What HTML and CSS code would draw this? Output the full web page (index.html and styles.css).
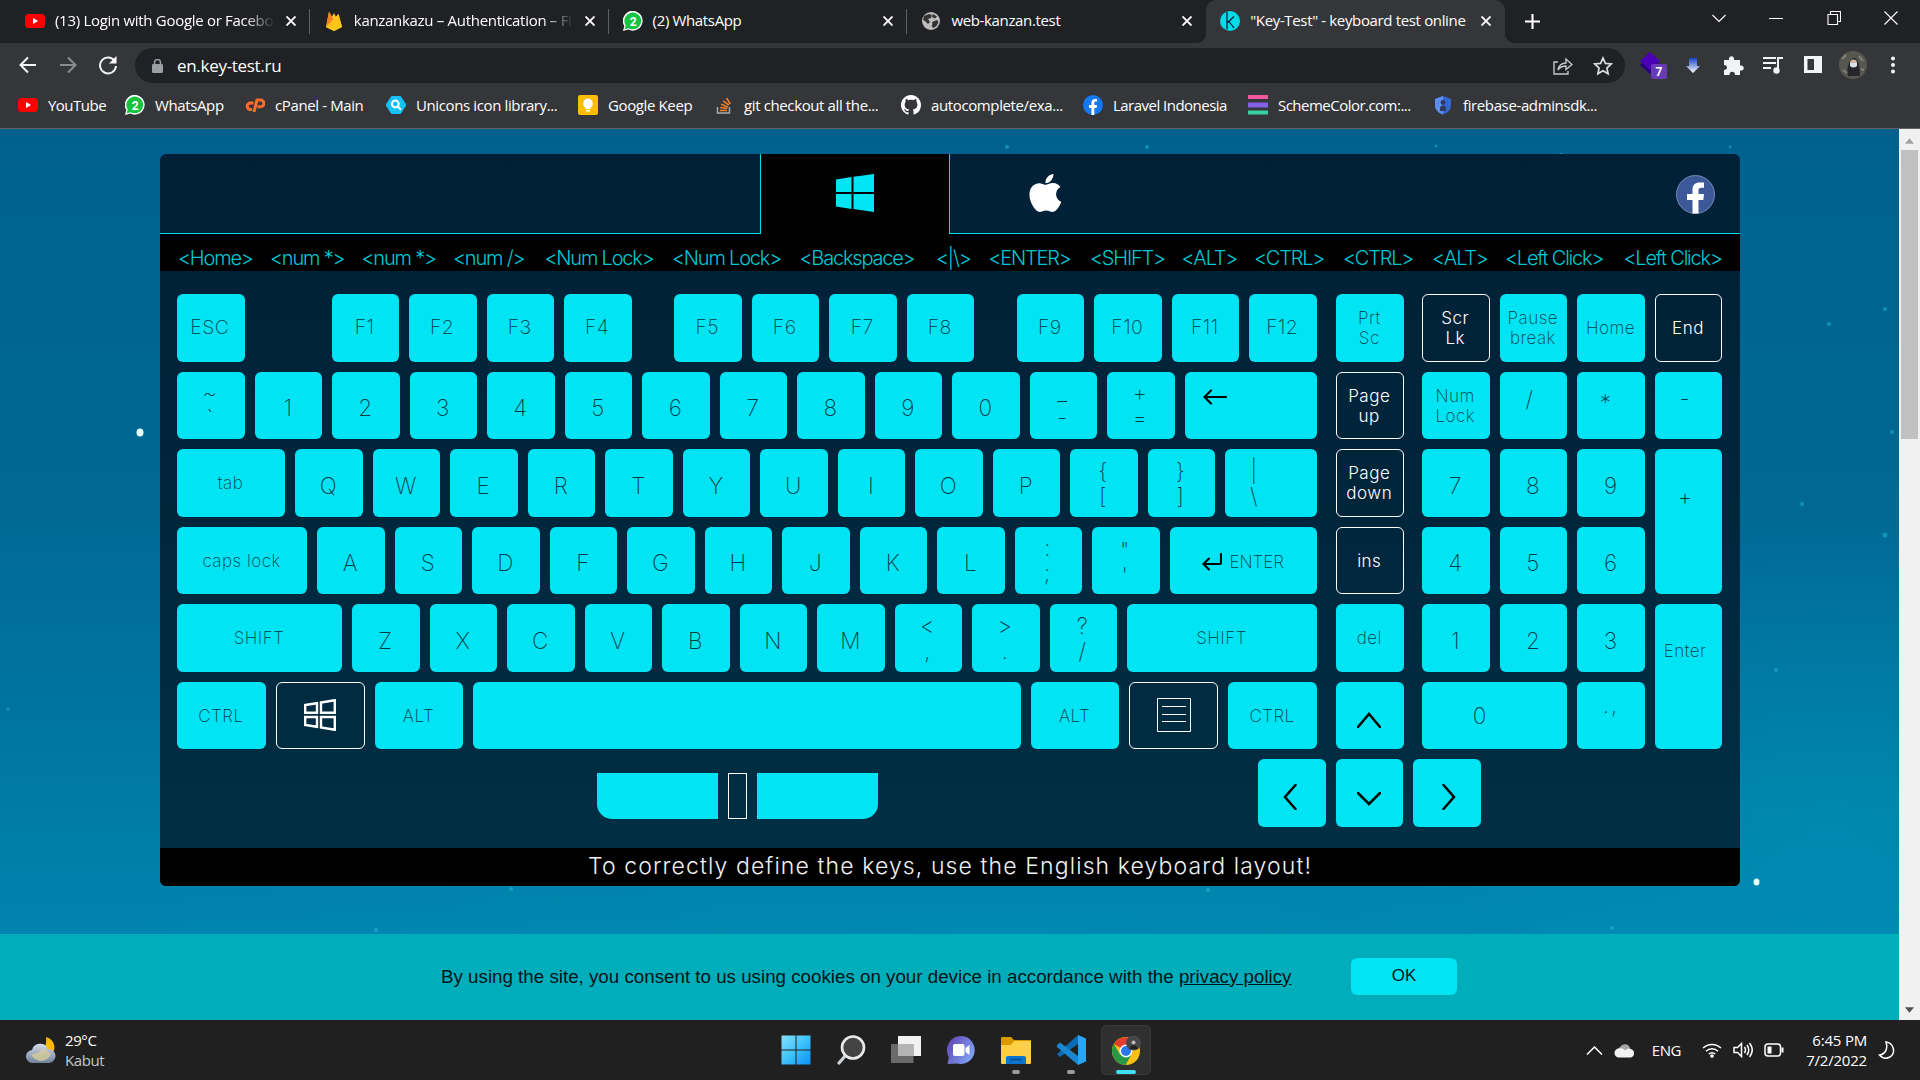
FILE: index.html
```html
<!DOCTYPE html>
<html lang="en">
<head>
<meta charset="utf-8">
<title>"Key-Test" - keyboard test online</title>
<link rel="stylesheet" href="styles.css">
</head>
<body>
<svg class="defs" width="0" height="0">
  <symbol id="yt" viewBox="0 0 20 20"><rect y="3" width="20" height="14" rx="3.5" fill="#f00"/><path d="M8 7l5.2 3L8 13z" fill="#fff"/></symbol>
  <symbol id="fb" viewBox="0 0 20 20"><circle cx="10" cy="10" r="10" fill="#1479f2"/><path d="M8.400 20v-7H6v-3h2.400V7.800C8.400 5.400 9.800 4 12 4c1 0 2 .2 2 .2v2.400h-1.200c-1.100 0-1.500.7-1.500 1.500V10H14l-.4 3h-2.300v7z" fill="#fff"/></symbol>
  <symbol id="x" viewBox="0 0 10 10"><path d="M.5.5l9 9M9.500.5l-9 9" stroke="#fff" stroke-width="1.900"/></symbol>
</svg>

<header class="chrome">
  <div class="tabs">
    <div class="tab"><svg class="fav"><use href="#yt"/></svg><span class="title fade">(13) Login with Google or Facebo</span><svg class="x"><use href="#x"/></svg></div>
    <div class="tab"><svg class="fav" viewBox="0 0 20 20"><path d="M2 16L5 .8l3 5L10 2l2 4 2.500-3L18 16l-8 4z" fill="#ffca28"/><path d="M2 16L5 .8l5.200 9z" fill="#f58220"/><path d="M2 16L14.500 3 18 16l-8 4z" fill="#ffc61a"/></svg><span class="title fade">kanzankazu – Authentication – Fi</span><svg class="x"><use href="#x"/></svg></div>
    <div class="tab"><svg class="fav" viewBox="0 0 20 20"><path d="M0 20l1.300-5A9.900 9.900 0 1 1 5.200 18.600z" fill="#fff"/><path d="M1.700 18.300l1-3.800A8.400 8.400 0 1 1 5.500 17.200z" fill="#16c33f"/><text x="10" y="14.500" text-anchor="middle" class="wa-n">2</text></svg><span class="title">(2) WhatsApp</span><svg class="x"><use href="#x"/></svg></div>
    <div class="tab last"><svg class="fav" viewBox="0 0 20 20"><circle cx="10" cy="10" r="9" fill="#bdbdbd"/><path d="M3 5l5-2 3 1-1 3-3 1 2 3-2 2-3-3-2-1zM11 11l5-2 1.500 2-2 4-3 2-2-2 1-2zM12 3l4 2.500-2 2-3-1.500z" fill="#333"/></svg><span class="title">web-kanzan.test</span><svg class="x"><use href="#x"/></svg></div>
    <div class="tab active"><svg class="fav" viewBox="0 0 20 20"><circle cx="10" cy="10" r="10" fill="#00dbe8"/><path d="M7 1v17.500M7 12l7-6.500M9 10.500l5 6.500" stroke="#013" stroke-width="1.200" fill="none"/></svg><span class="title">"Key-Test" - keyboard test online</span><svg class="x"><use href="#x"/></svg></div>
    <svg class="plus" viewBox="0 0 14 14"><path d="M7 0v14M0 7h14" stroke="#fff" stroke-width="2"/></svg>
    <div class="win">
      <svg viewBox="0 0 14 14"><path d="M.5 4l6.500 6.500L13.500 4" class="thin"/></svg>
      <svg viewBox="0 0 14 14"><path d="M0 7.500h14" class="thin"/></svg>
      <svg viewBox="0 0 14 14"><path d="M1 3.500h9.500v10H1zM3.500 3.500v-3h10v10h-3" class="thin"/></svg>
      <svg viewBox="0 0 14 14"><path d="M.5.5l13 13M13.500.5l-13 13" class="thin"/></svg>
    </div>
  </div>
  <div class="toolbar">
    <div class="nav">
      <svg viewBox="0 0 20 20"><path d="M18 10H3M10 2.500L2.500 10l7.500 7.500" class="st"/></svg>
      <svg viewBox="0 0 20 20" class="dim"><path d="M2 10h15M10 2.500l7.500 7.500-7.500 7.500" class="st"/></svg>
      <svg viewBox="0 0 20 20"><path d="M17 6.500A8 8 0 1 0 18 11" class="st"/><path d="M18.500 1v7.500H11z" fill="#fff"/></svg>
    </div>
    <div class="omni">
      <svg class="lock" viewBox="0 0 11 14"><rect y="5" width="11" height="9" rx="1.200" fill="#9aa0a6"/><path d="M2.500 6V3.500a3 3 0 0 1 6 0V6" fill="none" stroke="#9aa0a6" stroke-width="1.500"/></svg>
      <span class="url">en.key-test.ru</span>
      <svg class="share" viewBox="0 0 20 18"><path d="M5 5H1v12h14v-3M5 13c1-5 4-7 8-7V2l6 5.500-6 5V9c-4 0-6 1-8 4z" fill="none" stroke="#c4c7cb" stroke-width="1.400"/></svg>
      <svg class="star" viewBox="0 0 20 20"><path d="M10 2l2.400 5.400 5.900.6-4.400 4 1.200 5.800L10 14.800l-5.100 3L6.100 12 1.700 8l5.900-.6z" fill="none" stroke="#dadce0" stroke-width="1.700"/></svg>
    </div>
    <div class="ext">
      <svg viewBox="0 0 28 28"><path d="M1 14l10-9 10 9-10 9z" fill="#24007c"/><path d="M1 10l10-9 10 9-10 9z" fill="#4b00b8"/><rect x="12" y="13" width="16" height="15" rx="2" fill="#673ab7"/><text x="20" y="25" text-anchor="middle" class="badge">7</text></svg>
      <svg viewBox="0 0 28 28"><defs><linearGradient id="dl" x2="0" y2="1"><stop stop-color="#1543c4"/><stop offset="1" stop-color="#fff"/></linearGradient></defs><path d="M10 7h8v8h3l-7 7-7-7h3z" fill="url(#dl)"/></svg>
      <svg viewBox="0 0 28 28"><path d="M5 9h5c-1-5 6-5 5 0h6v5.500c5-1 5 6 0 5V24h-5c.5-4.500-6-4.500-5.500 0H5v-5c4 0 4-5 0-5z" fill="#f1f3f4"/></svg>
      <svg viewBox="0 0 28 28"><path d="M4 7h13M4 12h13M4 17h8" class="st"/><path d="M19 20V7h5" class="st"/><circle cx="17.500" cy="19.500" r="3.200" fill="#f1f3f4"/></svg>
      <svg viewBox="0 0 28 28"><path fill="#f1f3f4" fill-rule="evenodd" d="M5 5h18v17H5zM8.500 8v11H15V8z"/></svg>
      <svg viewBox="0 0 28 28"><circle cx="14" cy="14" r="14" fill="#56574f"/><path d="M9 25c-2-8 1-17 6-18 4 0 6 8 6 18z" fill="#25262a"/><circle cx="14.500" cy="12" r="3.500" fill="#d4b8ac"/><path d="M11 12h7v3q-3.500 3-7 0z" fill="#d9e1e6"/><path d="M3 8l4-4M4 19l4 3M20 5l4 5M22 18l3 1" stroke="#83847a" stroke-width="2"/></svg>
      <svg viewBox="0 0 28 28"><g fill="#f1f3f4"><circle cx="14" cy="7.500" r="2"/><circle cx="14" cy="14" r="2"/><circle cx="14" cy="20.500" r="2"/></g></svg>
    </div>
  </div>
  <nav class="marks">
    <a><svg><use href="#yt"/></svg><span class="tight">YouTube</span></a>
    <a><svg viewBox="0 0 20 20"><path d="M0 20l1.300-5A9.900 9.900 0 1 1 5.200 18.600z" fill="#fff"/><path d="M1.700 18.300l1-3.800A8.400 8.400 0 1 1 5.500 17.200z" fill="#16c33f"/><text x="10" y="14.500" text-anchor="middle" class="wa-n">2</text></svg>WhatsApp</a>
    <a><svg viewBox="0 0 20 20"><g fill="none" stroke="#ff6c2c" stroke-width="3"><path d="M8.500 8H5.500a3.300 3.300 0 0 0 0 6.600H7"/><path d="M9 17l3-12h3.500a3.300 3.300 0 0 1 0 6.800h-3"/></g></svg>cPanel - Main</a>
    <a><svg viewBox="0 0 20 20"><path d="M5.500 1.500h9L20 10l-5.500 8.500h-9L0 10z" fill="#13c0f7" stroke="#13c0f7"/><circle cx="9.300" cy="9" r="3.400" class="w2"/><path d="M12 11.700l3 3" class="w2"/></svg>Unicons icon library...</a>
    <a><svg viewBox="0 0 20 20"><rect width="20" height="20" rx="2" fill="#fbbc04"/><path d="M10 3.500a5 5 0 0 0-2.500 9.200V14h5v-1.300A5 5 0 0 0 10 3.500zM8 15h4v1.500H8z" fill="#fff"/></svg>Google Keep</a>
    <a><svg viewBox="0 0 20 20"><path d="M3.500 12v6h12v-6" fill="none" stroke="#a6aab0" stroke-width="1.500"/><path d="M6 15.500h7M6.300 12.500l7 1M7.200 9.200l6.500 2.800M9.200 5.800l5.600 4.400M12.500 3l3.800 6" stroke="#f48024" stroke-width="1.600"/></svg>git checkout all the...</a>
    <a><svg viewBox="0 0 16 16"><path fill="#fff" d="M8 0C3.580 0 0 3.580 0 8c0 3.540 2.290 6.530 5.470 7.590.4.070.55-.17.55-.38 0-.19-.01-.82-.01-1.490-2.010.37-2.530-.49-2.690-.94-.09-.23-.48-.94-.82-1.130-.28-.15-.68-.52-.01-.53.63-.01 1.080.58 1.230.82.72 1.210 1.870.87 2.330.66.07-.52.28-.87.51-1.070-1.780-.2-3.640-.89-3.640-3.950 0-.87.31-1.590.82-2.150-.08-.2-.36-1.020.08-2.120 0 0 .67-.21 2.200.82.64-.18 1.320-.27 2-.27s1.360.09 2 .27c1.530-1.040 2.200-.82 2.200-.82.44 1.100.16 1.920.08 2.120.51.560.82 1.270.82 2.150 0 3.070-1.870 3.750-3.650 3.950.29.25.54.73.54 1.480 0 1.070-.01 1.930-.01 2.200 0 .21.15.46.55.38A8.010 8.010 0 0 0 16 8c0-4.420-3.580-8-8-8z"/></svg>autocomplete/exa...</a>
    <a><svg><use href="#fb"/></svg><span class="tight">Laravel Indonesia</span></a>
    <a><svg viewBox="0 0 20 20"><path fill="#f0599e" d="M0 0h20v4H0z"/><path fill="#8561e8" d="M0 7.500h20v5H0z"/><path fill="#36cfa0" d="M0 15.500h20v4H0z"/></svg><span class="tight">SchemeColor.com:...</span></a>
    <a><svg viewBox="0 0 20 20"><path d="M10 1l8 3v6c0 5-3.500 8-8 9.500C5.500 18 2 15 2 10V4z" fill="#3367d6"/><path d="M10 1v18.500C5.500 18 2 15 2 10V4z" fill="#5e8df0"/><circle cx="10" cy="7.500" r="2.400" fill="#2e3b5e"/><path d="M7 16v-2.500a3 3 0 0 1 6 0V16z" fill="#2e3b5e"/></svg>firebase-adminsdk...</a>
  </nav>
</header>

<main class="page">
  <div class="site">
    <svg class="sky" viewBox="0 0 1899 805" preserveAspectRatio="none">
      <g fill="#2fd0e6" opacity=".4"><circle cx="1730" cy="18" r="1.500"/><circle cx="1561" cy="26" r="2"/><circle cx="1436" cy="17" r="1.500"/><circle cx="1007" cy="18" r="2"/><circle cx="1147" cy="18" r="2"/><circle cx="1829" cy="195" r="2"/><circle cx="1885" cy="180" r="2"/><circle cx="1892" cy="303" r="2"/><circle cx="1802" cy="375" r="2"/><circle cx="1885" cy="406" r="2.500"/><circle cx="376" cy="801" r="2"/><circle cx="511" cy="760" r="2"/><circle cx="1208" cy="761" r="2"/><circle cx="1776" cy="541" r="2"/><circle cx="1612" cy="799" r="2"/><circle cx="8" cy="580" r="1.500"/></g>
      <g fill="#e8ffff"><ellipse cx="140" cy="303.500" rx="3.500" ry="4"/><ellipse cx="1756.500" cy="753" rx="3" ry="3.500"/></g>
    </svg>
    <section class="panel">
      <div class="os">
        <div class="side"></div>
        <div class="os-tab on"><svg width="38" height="38" viewBox="0 0 38 38"><path fill="#00e4f3" d="M0 5.500L15.500 3v15H0zM17.500 2.700L38 0v18H17.500zM0 20h15.500v15L0 32.500zM17.500 20H38v18l-20.500-3z"/></svg></div>
        <div class="os-tab"><svg width="32" height="38" viewBox="4 32 367 448"><path fill="#fff" d="M318.700 268.700c-.2-36.700 16.400-64.400 50-84.800-18.800-26.900-47.200-41.700-84.700-44.600-35.500-2.800-74.300 20.700-88.500 20.700-15 0-49.400-19.700-76.400-19.700C63.300 141.200 4 184.800 4 273.500q0 39.300 14.400 81.200c12.800 36.700 59 126.700 107.200 125.200 25.200-.6 43-17.900 75.800-17.900 31.800 0 48.300 17.900 76.400 17.900 48.600-.7 90.400-82.500 102.600-119.300-65.200-30.700-61.700-90-61.700-91.900zm-56.600-164.200c27.300-32.400 24.800-61.900 24-72.500-24.100 1.400-52 16.400-67.900 34.900-17.500 19.800-27.800 44.300-25.600 71.900 26.100 2 49.900-11.400 69.500-34.300z"/></svg></div>
        <div class="side right"><svg width="39" height="39" viewBox="0 0 39 39"><circle cx="19.500" cy="19.500" r="19" fill="#3b5998" stroke="#8b9dc3" stroke-width=".8"/><path d="M16.500 38.500V25H11v-6h5.500v-4.500c0-4.700 2.800-7 7-7H28v5.300h-2.600c-2.200 0-2.900 1-2.900 2.700V19H28l-.7 6h-4.800v13.500z" fill="#fff"/></svg></div>
      </div>
      <div class="log"><span>&lt;Home&gt;</span><span>&lt;num *&gt;</span><span>&lt;num *&gt;</span><span>&lt;num /&gt;</span><span>&lt;Num Lock&gt;</span><span>&lt;Num Lock&gt;</span><span>&lt;Backspace&gt;</span><span>&lt;|\&gt;</span><span>&lt;ENTER&gt;</span><span>&lt;SHIFT&gt;</span><span>&lt;ALT&gt;</span><span>&lt;CTRL&gt;</span><span>&lt;CTRL&gt;</span><span>&lt;ALT&gt;</span><span>&lt;Left Click&gt;</span><span>&lt;Left Click&gt;</span></div>
      <div class="board">
        <div class="main">
          <div class="row fn"><b>ESC</b><i></i><b>F1</b><b>F2</b><b>F3</b><b>F4</b><i class="sm"></i><b>F5</b><b>F6</b><b>F7</b><b>F8</b><i class="sm"></i><b>F9</b><b>F10</b><b>F11</b><b>F12</b></div>
          <div class="row nums"><b class="two">~<br>`</b><b>1</b><b>2</b><b>3</b><b>4</b><b>5</b><b>6</b><b>7</b><b>8</b><b>9</b><b>0</b><b class="two">_<br>-</b><b class="two">+<br>=</b><b class="wide back"><svg width="24" height="16" viewBox="0 0 24 16"><path d="M23 8H2M8 1.500L1.500 8 8 14.500" class="k"/></svg></b></div>
          <div class="row"><b class="s tab-k">tab</b><b>Q</b><b>W</b><b>E</b><b>R</b><b>T</b><b>Y</b><b>U</b><b>I</b><b>O</b><b>P</b><b class="two">{<br>[</b><b class="two">}<br>]</b><b class="two wide bs">|<br>\</b></div>
          <div class="row"><b class="s caps">caps lock</b><b>A</b><b>S</b><b>D</b><b>F</b><b>G</b><b>H</b><b>J</b><b>K</b><b>L</b><b class="two">:<br>;</b><b class="two low">"<br>'</b><b class="s wide enter"><svg width="20" height="18" viewBox="0 0 20 18"><path d="M19 1v9q0 1-1 1H2M7 5.500L1.500 11 7 16.500" class="k"/></svg>ENTER</b></div>
          <div class="row"><b class="s lshift">SHIFT</b><b>Z</b><b>X</b><b>C</b><b>V</b><b>B</b><b>N</b><b>M</b><b class="two">&lt;<br>,</b><b class="two">&gt;<br>.</b><b class="two">?<br>/</b><b class="s wide">SHIFT</b></div>
          <div class="row mods"><b class="s">CTRL</b><b class="off"><svg width="32" height="32" viewBox="0 0 32 32"><path d="M1.200 6L13 4.200v9.600H1.200zM17 3.500L30.800 1.200v12.600H17zM1.200 18H13v9.800L1.200 26zM17 18h13.800v12.800L17 28.500z" fill="none" stroke="#fff" stroke-width="2.400"/></svg></b><b class="s">ALT</b><b class="space"></b><b class="s">ALT</b><b class="off"><svg width="34" height="34" viewBox="0 0 34 34"><path d="M.5.5h33v33H.5zM5 8.500h24M5 16.500h24M5 23.500h24" fill="none" stroke="#fff"/></svg></b><b class="s">CTRL</b></div>
        </div>
        <div class="mid"><b class="s">Prt<br>Sc</b><b class="s off">Page<br>up</b><b class="s off">Page<br>down</b><b class="s off">ins</b><b class="s">del</b><b><svg class="arr" width="24" height="16" viewBox="0 0 24 16"><path d="M1 15L12 2l11 13" class="k2"/></svg></b></div>
        <div class="pad">
          <b class="s off">Scr<br>Lk</b><b class="s">Pause<br>break</b><b class="s">Home</b><b class="s off">End</b>
          <b class="s">Num<br>Lock</b><b class="up">/</b><b class="up star-k">*</b><b class="up">-</b>
          <b>7</b><b>8</b><b>9</b><b class="tall plusk">+</b>
          <b>4</b><b>5</b><b>6</b>
          <b>1</b><b>2</b><b>3</b><b class="tall s entk">Enter</b>
          <b class="zero">0</b><b class="up dot">.,</b>
        </div>
      </div>
      <div class="lower">
        <div class="mouse"><span class="ml"></span><span class="mm"></span><span class="mr"></span></div>
        <div class="arrows">
          <b class="al"><svg width="14" height="26" viewBox="0 0 14 26"><path d="M12.500 1L2 13l10.500 12" class="k2"/></svg></b>
          <b class="ad"><svg width="24" height="14" viewBox="0 0 24 14"><path d="M1 1l11 11L23 1" class="k2"/></svg></b>
          <b class="ar"><svg width="14" height="26" viewBox="0 0 14 26"><path d="M1.500 1L12 13 1.500 25" class="k2"/></svg></b>
        </div>
      </div>
      <div class="note"><span>To correctly define the keys, use the English keyboard layout!</span></div>
    </section>
    <div class="cookie"><p>By using the site, you consent to us using cookies on your device in accordance with the <u>privacy policy</u></p><span class="ok">OK</span></div>
  </div>
  <div class="scroll"><svg width="9" height="6" viewBox="0 0 10 6"><path d="M5 0l5 6H0z" fill="#a3a3a3"/></svg><div class="thumb"></div><svg width="9" height="6" viewBox="0 0 10 6"><path d="M5 6l5-6H0z" fill="#505050"/></svg></div>
</main>

<footer class="taskbar">
  <div class="weather">
    <svg width="30" height="28" viewBox="0 0 30 28"><defs><linearGradient id="cl" x2="0" y2="1"><stop stop-color="#d5dbe6"/><stop offset="1" stop-color="#71819b"/></linearGradient></defs><path d="M20 1c8 2 11 11 6 17H12c6-3 9-9 8-17z" fill="#ffb900"/><path d="M7 27a6.500 6.500 0 0 1-1-13 8.500 8.500 0 0 1 16-1 7 7 0 0 1 1 14z" fill="url(#cl)"/><path d="M5 18q7 1 12-6l8 6q-3 7-10 7-8-1-10-7z" fill="#d8cf9b" opacity=".75"/></svg>
    <div><div>29°C</div><div class="grey">Kabut</div></div>
  </div>
  <div class="apps">
    <div><svg viewBox="0 0 30 30"><defs><linearGradient id="wn" x2="1" y2="1"><stop stop-color="#86e1fd"/><stop offset=".5" stop-color="#3fc3fb"/><stop offset="1" stop-color="#0a90f5"/></linearGradient></defs><path d="M.5.5h14v14h-14zM15.500.5h14v14h-14zM.5 15.500h14v14h-14zM15.500 15.500h14v14h-14z" fill="url(#wn)"/></svg></div>
    <div><svg viewBox="0 0 30 30"><path d="M9.500 20.500L3 28" stroke="#d0d3d8" stroke-width="3.200" stroke-linecap="round"/><circle cx="17" cy="12.500" r="11" fill="#444" stroke="#e8eaed" stroke-width="2.600"/></svg></div>
    <div><svg viewBox="0 0 30 30"><path d="M7 1h23v20H7z" fill="#f2f2f2"/><path d="M0 9h22.500v19H0z" fill="#7d7d7d" opacity=".8"/><path d="M7 9h15.500v12H7z" fill="#b4b4b4"/></svg></div>
    <div><svg viewBox="0 0 30 30"><defs><linearGradient id="tm" x2="1" y2=".6"><stop offset=".2" stop-color="#6650b9"/><stop offset="1" stop-color="#7fa2f5"/></linearGradient></defs><path d="M15 1a14 14 0 1 1-4 27.500L1.500 29l1.300-7A14 14 0 0 1 15 1z" fill="url(#tm)"/><rect x="7" y="9" width="11.500" height="12" rx="2" fill="#fff"/><path d="M19.500 13l4-3v10l-4-3z" fill="#fff"/></svg></div>
    <div class="dot-ind"><svg viewBox="0 0 30 30"><path d="M0 3q0-1 1-1h9l3 3h17v10H0z" fill="#d99a00"/><path d="M0 10h10l3-4h16q1 0 1 1v21q0 1-1 1H1q-1 0-1-1z" fill="#ffcf47"/><path d="M5 29v-6q0-2 2-2h16q2 0 2 2v6z" fill="#0b75cf"/><path d="M9 24.500h12" stroke="#054a8b" stroke-width="1.500"/></svg></div>
    <div class="dot-ind"><svg viewBox="0 0 30 30"><path d="M1 19L22 0v9L4 22z" fill="#0b6cb5"/><path d="M1 10l3-2.500L22 21v9L1 12z" fill="#1687d2"/><path d="M22 0l8 3.500v23L22 30z" fill="#2aa5f2"/></svg></div>
    <div class="cur"><svg viewBox="0 0 30 30"><circle cx="15" cy="16" r="14" fill="#fbc116"/><path d="M15 16L2.900 9A14 14 0 0 1 27 9H15z" fill="#e33b2e"/><path d="M14.500 30l6-10.500H9L2.900 9a14 14 0 0 0 11.600 21z" fill="#279847"/><circle cx="15" cy="16" r="6.500" fill="#fff"/><circle cx="15" cy="16" r="5" fill="#2a78ea"/><circle cx="22.500" cy="8" r="7.500" fill="#45464a"/><circle cx="22.500" cy="7.500" r="2" fill="#c9b7b0"/><path d="M18 14q5-8 9 0z" fill="#222"/></svg></div>
  </div>
  <div class="tray">
    <svg width="17" height="9" viewBox="0 0 17 9"><path d="M1 8.500l7.500-7.500 7.500 7.500" class="tk"/></svg>
    <svg width="21" height="16" viewBox="0 0 21 16"><path d="M3 9a6 6 0 0 1 3-4 5.500 5.500 0 0 1 10 1v6z" fill="#a5a5a5"/><path d="M5 15.500a4.500 4.500 0 0 1 0-9q4-1 6 2 3-3 6-1.500a4.500 4.500 0 0 1 0 8.500z" fill="#f2f2f2"/></svg>
    <span>ENG</span>
    <svg width="20" height="16" viewBox="0 0 20 16"><path d="M1 6a13 13 0 0 1 18 0M4 9.200a8.600 8.600 0 0 1 12 0M6.800 12a4.500 4.500 0 0 1 6.400 0" class="tk"/><circle cx="10" cy="14" r="1.800" fill="#fff"/></svg>
    <svg width="20" height="18" viewBox="0 0 20 18"><path d="M1 6.500v5h3.500l4 4V2.500l-4 4zM11.500 6q2 3 0 6M14 4q3.500 5 0 10M16.500 2q5.500 7 0 14" class="tk"/></svg>
    <svg width="20" height="14" viewBox="0 0 20 14"><rect x="1" y="1" width="15.500" height="12" rx="3" class="tk"/><path d="M3.500 3.500h4v7h-4zM17.500 4.500h2v5h-2z" fill="#fff"/></svg>
    <div class="clock"><div>6:45 PM</div><div>7/2/2022</div></div>
    <svg width="17" height="18" viewBox="0 0 17 18"><path d="M8 1c8 1 10 11 4 15-4 2-8 1-10.500-2C8 13 10 7 8 1z" class="tk"/></svg>
  </div>
</footer>
</body>
</html>
```
FILE: styles.css
```css
* { box-sizing: border-box; }
body {
  margin: 0; width: 1920px; height: 1080px; overflow: hidden;
  display: flex; flex-direction: column; background: #202124;
  font-family: "Open Sans", "Noto Sans", sans-serif; font-size: 15px; color: #fff;
}
svg { display: block; flex: none; }
.defs { position: absolute; }
.wa-n { font: bold 12px Roboto, sans-serif; fill: #fff; }
.badge { font: bold 12px Roboto, sans-serif; fill: #fff; }
.st { fill: none; stroke: #f1f3f4; stroke-width: 2; }
.thin { fill: none; stroke: #fff; stroke-width: 1.1; }
.w2 { fill: none; stroke: #fff; stroke-width: 2; }

/* browser frame */
.chrome { height: 129px; background: #35363a; border-bottom: 1px solid #5f6164; }
.tabs { height: 43px; background: #202124; display: flex; align-items: stretch; padding-left: 11px; }
.tab { width: 298.800px; display: flex; align-items: center; padding: 0 14px 2px 14px; position: relative; letter-spacing: -.35px; }
.tab:not(.last):not(.active)::after { content: ""; position: absolute; right: 0; top: 9px; width: 1px; height: 25px; background: #5f6164; }
.tab.active { background: #35363a; border-radius: 10px 10px 0 0; }
.tab.active::before, .tab.active::after { content: ""; position: absolute; bottom: 0; width: 10px; height: 10px; }
.tab.active::before { left: -10px; background: radial-gradient(circle at 0 0, #202124 10px, #35363a 10.500px); }
.tab.active::after { right: -10px; background: radial-gradient(circle at 100% 0, #202124 10px, #35363a 10.500px); }
.fav { width: 20px; height: 20px; margin-right: 10px; }
.title { flex: 1; white-space: nowrap; margin-right: 11px; position: relative; top: -.5px; }
.fade { letter-spacing: -.3px; -webkit-mask-image: linear-gradient(90deg, #000 86%, transparent); mask-image: linear-gradient(90deg, #000 86%, transparent); }
.tab .x { width: 10px; height: 10px; }
.plus { width: 15px; height: 15px; margin: 14px 0 0 20px; }
.win { margin: 11px 22px 0 auto; display: flex; gap: 43.500px; }
.win svg { width: 14px; height: 14px; }
.toolbar { height: 45px; padding-top: 5px; display: flex; }
.nav { width: 135px; display: flex; gap: 20px; padding: 7px 0 0 18px; }
.nav svg { width: 20px; height: 20px; }
.dim { opacity: .45; }
.omni { width: 1490px; height: 35px; border-radius: 18px; background: #202124; display: flex; align-items: center; padding: 0 12px 0 17px; }
.lock { width: 11px; height: 14px; }
.url { font-size: 17px; margin: 0 auto 0 14px; letter-spacing: -.3px; }
.share { width: 20px; height: 18px; margin-right: 20px; }
.star { width: 20px; height: 20px; }
.ext { display: flex; gap: 12px; padding: 3px 0 0 13.500px; }
.ext svg { width: 28px; height: 28px; }
.marks { height: 35px; padding: 0 0 1px 18px; display: grid; align-items: center; grid-template-columns: 107px 120px 141px 192px 136px 187px 182px 165px 185px 180px; letter-spacing: -.38px; }
.marks a { display: flex; align-items: center; gap: 10px; white-space: nowrap; }
.marks svg { width: 20px; height: 20px; }
.tight { letter-spacing: -.52px; }

/* page */
.page { height: 891px; display: flex; }
.site {
  width: 1899px; position: relative; padding: 25px 159px 0 160px;
  background:
    radial-gradient(ellipse 500px 300px at 1830px 700px, rgba(0,155,190,.4), transparent),
    radial-gradient(ellipse 900px 240px at 1000px 860px, rgba(0,150,185,.35), transparent),
    linear-gradient(#00618f 0, #006893 40%, #0074a0 65%, #0085b0 92%, #0085b0);
}
.sky { position: absolute; left: 0; top: 0; width: 1899px; height: 805px; }
.panel { position: relative; height: 732px; border-radius: 6px; overflow: hidden; background: linear-gradient(#002037, #00263c 50%, #003045); font-family: Inter, "Liberation Sans", sans-serif; }
.os { height: 80px; display: grid; grid-template-columns: 600px 190px 190px 1fr; }
.os > * { border-bottom: 1px solid #00dcea; }
.os-tab { display: flex; justify-content: center; padding: 20px 1px 0 0; }
.os-tab.on { background: #000; border: solid #00dcea; border-width: 0 1px; padding-right: 0; }
.side.right { display: flex; justify-content: flex-end; padding: 21px 25px 0 0; }
.log {
  height: 37px; background: #000; color: #00c9d6; padding: 12px 0 0 18px;
  font-size: 20px; line-height: 24px; font-weight: 300; letter-spacing: -1.200px; white-space: nowrap;
  display: grid; grid-template-columns: 92px 91.500px 91.500px 91.500px 127.500px 127.500px 136.500px 52.500px 101.500px 91.500px 72.500px 89px 89px 73px 118.500px 110px;
}
.board { display: flex; padding: 23px 0 0 17px; height: 478px; }
b {
  width: 67.500px; height: 67.500px; border-radius: 6px; background: #00e4f3; color: #003c4a;
  font-weight: 200; font-size: 22.500px; line-height: 25px; text-align: center;
  display: flex; align-items: center; justify-content: center; padding: 5px 1px 0 0; flex: none;
}
b.off { background: none; border: 1px solid #fff; color: #fff; font-weight: 300; }
b.s { font-size: 17px; line-height: 20px; letter-spacing: .5px; padding: 1px 1px 0 0; }
.row { display: flex; gap: 10px; }
.main { width: 1140px; display: flex; flex-direction: column; gap: 10px; }
.fn b { font-size: 19.500px; padding: 0 2px 0 0; letter-spacing: .4px; }
.fn i { width: 67.900px; }
.fn i.sm { width: 22.800px; }
b.two { padding: 0 2px 0 0; }
b.low { padding-top: 5px; }
b.wide { width: auto; flex: 1; }
b.back { justify-content: flex-start; align-items: flex-start; padding: 17px 0 0 18px; }
b.bs { justify-content: flex-start; padding-left: 25px; }
b.tab-k { width: 108px; }
b.caps { width: 130px; }
b.lshift { width: 165px; }
b.enter { gap: 8px; letter-spacing: 0; padding-top: 3px; }
.mods b { width: 88.800px; }
.mods b.off { padding: 0; }
.mods b.space { flex: 1; }
.k { fill: none; stroke: #000; stroke-width: 2.100; stroke-linecap: round; }
.k2 { fill: none; stroke: #000; stroke-width: 2.500; stroke-linecap: round; }
.mid { margin-left: 19px; display: flex; flex-direction: column; gap: 10px; }
.arr { margin-top: 5px; }
.pad { margin-left: 18.500px; height: 455px; display: grid; grid-template-columns: repeat(4, 67.600px); grid-auto-rows: 67.500px; gap: 10px; }
b.tall { grid-row: span 2; height: auto; align-items: flex-start; }
b.plusk { padding: 35px 7px 0 0; }
b.entk { padding: 37px 7px 0 0; }
b.up { padding: 0 8px 14px 0; }
b.star-k { padding: 0 11px 6px 0; }
b.dot { padding: 0 0 22px; letter-spacing: 2px; }
b.zero { grid-column: span 2; width: auto; padding: 1px 30px 0 0; }
.lower { height: 99px; display: flex; padding: 10px 0 0 437px; }
.mouse { display: flex; gap: 10px; padding-top: 14px; width: 661px; }
.mouse span { height: 46px; width: 121px; background: #00e4f3; }
.mouse .ml { border-radius: 0 0 0 15px; }
.mouse .mr { border-radius: 0 0 15px 0; }
.mouse .mm { width: 19px; background: none; border: 1px solid #fff; }
.arrows { display: flex; gap: 10px; }
.arrows b { padding: 9px 0 0; }
b.al { padding-right: 4px; }
b.ad { padding-top: 12px; }
b.ar { padding-left: 4px; }
.note { height: 38px; background: #000; color: #f0f0f0; font-size: 23px; line-height: 36px; font-weight: 300; letter-spacing: 1.110px; text-align: center; white-space: nowrap; }
.cookie {
  position: absolute; left: 0; right: 0; bottom: 0; height: 86px; background: #00aebb; color: #001316;
  display: flex; align-items: center; padding: 0 0 1px 441px; font: 18.750px "Liberation Sans", sans-serif;
}
.cookie p { margin: 0; width: 910px; white-space: nowrap; }
.ok { width: 106px; height: 37px; border-radius: 6px; background: #00e4f3; text-align: center; line-height: 35px; font-size: 17px; }
.scroll { width: 21px; background: #f1f1f1; display: flex; flex-direction: column; align-items: center; padding: 9px 0 7px; }
.thumb { width: 17px; height: 289px; background: #c1c1c1; margin: 6px 0 auto; }

/* taskbar */
.taskbar { height: 60px; background: #202020; display: flex; align-items: center; position: relative; line-height: 20px; letter-spacing: -.4px; }
.weather { display: flex; gap: 9px; align-items: center; width: 770.500px; padding-left: 26px; }
.grey { color: #c6c6c6; }
.apps { display: flex; gap: 5px; }
.apps > div { width: 50px; height: 50px; display: flex; align-items: center; justify-content: center; position: relative; border-radius: 5px; }
.apps svg { width: 30px; height: 30px; }
.dot-ind::after, .cur::after { content: ""; position: absolute; bottom: 1px; width: 8px; height: 4px; border-radius: 2px; background: #9a9a9a; }
.apps .cur { background: #2f2f2f; border: 1px solid #383838; }
.apps .cur::after { width: 20px; bottom: 0; background: #3fe0f7; }
.tray { margin-left: auto; display: flex; align-items: center; padding-right: 25px; }
.tray > * { margin-right: 11px; }
.tray span { margin: 0 21px 0 6px; }
.clock { text-align: right; margin-left: 11px; letter-spacing: -.2px; }
.tray > :last-child { margin-right: 0; }
.tk { fill: none; stroke: #fff; stroke-width: 1.500; }
```
